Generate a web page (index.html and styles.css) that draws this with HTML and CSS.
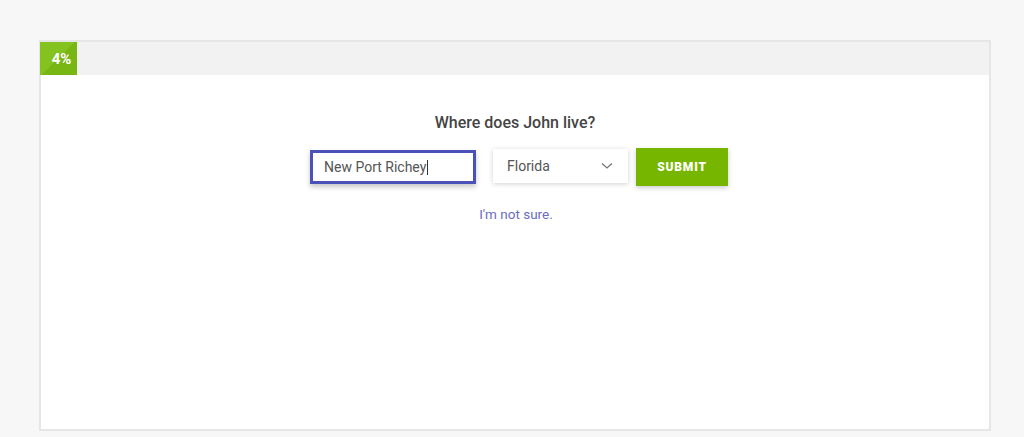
FILE: index.html
```html
<!DOCTYPE html>
<html>
<head>
<meta charset="utf-8">
<link rel="stylesheet" href="styles.css">
</head>
<body>
<div class="card">
  <div class="topbar">
    <div class="badge">4%</div>
  </div>
  <div class="content">
    <h2 class="question">Where does John live?</h2>
    <div class="row">
      <div class="input">New Port Richey<span class="caret"></span></div>
      <div class="select">
        <span>Florida</span>
        <svg width="12" height="8" viewBox="0 0 12 8"><path d="M1 1.5 L6 6 L11 1.5" fill="none" stroke="#777" stroke-width="1.3"/></svg>
      </div>
      <button class="submit">SUBMIT</button>
    </div>
    <a class="unsure">I'm not sure.</a>
  </div>
</div>
</body>
</html>
```
FILE: styles.css
```css
html, body { margin: 0; padding: 0; }
body {
  background: #f7f7f7;
  font-family: Roboto, "Liberation Sans", sans-serif;
  width: 1024px;
  height: 437px;
  overflow: hidden;
}
.card {
  margin: 40px 0 0 39px;
  width: 948px;
  height: 387px;
  background: #fff;
  border: 2px solid #e6e6e6;
}
.topbar {
  height: 33px;
  background: #f2f2f2;
  display: flex;
}
.badge {
  box-sizing: border-box;
  width: 37px;
  height: 33px;
  background: linear-gradient(135deg, #84c21f 0%, #84c21f 50%, #77b613 50%, #77b613 100%);
  color: #fff;
  font-weight: 700;
  font-size: 15px;
  display: flex;
  align-items: center;
  justify-content: center;
  margin-left: -1px;
  padding-left: 6px;
}
.content {
  display: flex;
  flex-direction: column;
  align-items: center;
}
.question {
  margin: 38px 0 0 0;
  font-size: 16px;
  font-weight: 500;
  color: #444;
  height: 20px;
  line-height: 20px;
}
.row {
  display: flex;
  align-items: flex-start;
  margin-top: 17px;
  margin-left: 8px;
}
.input {
  box-sizing: border-box;
  width: 166px;
  height: 34px;
  margin-top: 0;
  border: 3px solid #4a51b9;
  box-shadow: 0 3px 5px rgba(0,0,0,0.22);
  padding: 0 0 0 11px;
  font-size: 14px;
  color: #555;
  display: flex;
  align-items: center;
}
.caret {
  display: inline-block;
  width: 1px;
  height: 15px;
  background: #333;
  margin-left: 1px;
}
.select {
  box-sizing: border-box;
  width: 135px;
  height: 34px;
  margin-left: 17px;
  margin-top: -1px;
  background: #fff;
  box-shadow: 0 1px 5px rgba(0,0,0,0.18);
  padding: 0 15px 0 14px;
  display: flex;
  align-items: center;
  justify-content: space-between;
  font-size: 14px;
  color: #555;
}
.submit {
  width: 92px;
  height: 38px;
  margin-left: 8px;
  margin-top: -2px;
  border: none;
  background: #76b600;
  color: #fff;
  font-family: Roboto, "Liberation Sans", sans-serif;
  font-weight: 900;
  font-size: 12px;
  letter-spacing: 0.8px;
  box-shadow: 0 2px 5px rgba(0,0,0,0.2);
  padding: 0;
}
.unsure {
  margin-top: 20px;
  font-size: 13.5px;
  color: #6b6cc4;
  margin-left: 2px;
}
```
